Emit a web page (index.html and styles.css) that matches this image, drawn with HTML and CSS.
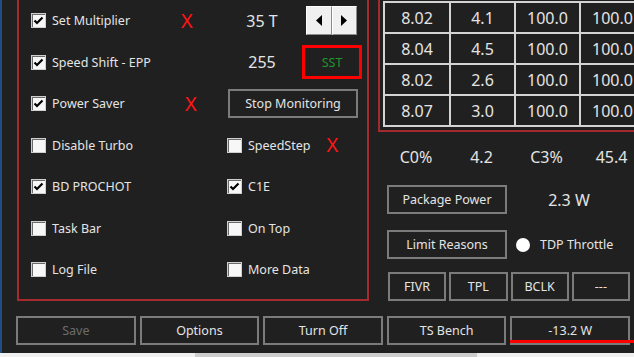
FILE: index.html
```html
<!DOCTYPE html>
<html lang="en">
<head>
    <meta charset="UTF-8">
    <meta name="viewport" content="width=device-width, initial-scale=1.0">
    <title>ThrottleStop</title>
    <link rel="stylesheet" href="styles.css">
</head>
<body>

<div class="app">
    <div class="top">
        <!-- Options panel -->
        <section class="options">
            <div class="row">
                <label class="check"><span class="box"><svg width="11" height="11" viewBox="0 0 11 11"><path d="M1.5 5.5 L4 8 L9.5 2.5" /></svg></span>Set Multiplier</label>
                <span class="mark">X</span>
                <div class="cell">
                    <span class="value">35 T</span>
                    <span class="arrows">
                        <span class="arrow"><svg width="6" height="11" viewBox="0 0 6 11"><path d="M6 0 L0 5.5 L6 11 Z" /></svg></span>
                        <span class="arrow"><svg width="6" height="11" viewBox="0 0 6 11"><path d="M0 0 L6 5.5 L0 11 Z" /></svg></span>
                    </span>
                </div>
            </div>
            <div class="row">
                <label class="check"><span class="box"><svg width="11" height="11" viewBox="0 0 11 11"><path d="M1.5 5.5 L4 8 L9.5 2.5" /></svg></span>Speed Shift - EPP</label>
                <span></span>
                <div class="cell">
                    <span class="value">255</span>
                    <span class="sst">SST</span>
                </div>
            </div>
            <div class="row">
                <label class="check"><span class="box"><svg width="11" height="11" viewBox="0 0 11 11"><path d="M1.5 5.5 L4 8 L9.5 2.5" /></svg></span>Power Saver</label>
                <span class="mark shift">X</span>
                <div class="cell">
                    <button class="btn stop">Stop Monitoring</button>
                </div>
            </div>
            <div class="row">
                <label class="check"><span class="box"></span>Disable Turbo</label>
                <span></span>
                <div class="cell">
                    <label class="check"><span class="box"></span>SpeedStep</label>
                    <span class="mark right-mark">X</span>
                </div>
            </div>
            <div class="row">
                <label class="check"><span class="box"><svg width="11" height="11" viewBox="0 0 11 11"><path d="M1.5 5.5 L4 8 L9.5 2.5" /></svg></span>BD PROCHOT</label>
                <span></span>
                <div class="cell">
                    <label class="check"><span class="box"><svg width="11" height="11" viewBox="0 0 11 11"><path d="M1.5 5.5 L4 8 L9.5 2.5" /></svg></span>C1E</label>
                </div>
            </div>
            <div class="row">
                <label class="check"><span class="box"></span>Task Bar</label>
                <span></span>
                <div class="cell">
                    <label class="check"><span class="box"></span>On Top</label>
                </div>
            </div>
            <div class="row">
                <label class="check"><span class="box"></span>Log File</label>
                <span></span>
                <div class="cell">
                    <label class="check"><span class="box"></span>More Data</label>
                </div>
            </div>
        </section>

        <div class="right">
            <!-- Core table -->
            <section class="table-panel">
                <div class="grid">
                    <span>8.02</span><span>4.1</span><span>100.0</span><span>100.0</span>
                    <span>8.04</span><span>4.5</span><span>100.0</span><span>100.0</span>
                    <span>8.02</span><span>2.6</span><span>100.0</span><span>100.0</span>
                    <span>8.07</span><span>3.0</span><span>100.0</span><span>100.0</span>
                </div>
            </section>

            <div class="cstates">
                <span>C0%</span><span>4.2</span><span>C3%</span><span>45.4</span>
            </div>

            <div class="power-row">
                <button class="btn">Package Power</button>
                <span class="watt">2.3 W</span>
            </div>
            <div class="power-row limit">
                <button class="btn">Limit Reasons</button>
                <span class="radio"></span>
                <span>TDP Throttle</span>
            </div>

            <div class="small">
                <button class="btn">FIVR</button>
                <button class="btn">TPL</button>
                <button class="btn">BCLK</button>
                <button class="btn">---</button>
            </div>
        </div>
    </div>

    <!-- Bottom buttons -->
    <div class="bottom">
        <button class="btn save">Save</button>
        <button class="btn">Options</button>
        <button class="btn">Turn Off</button>
        <button class="btn">TS Bench</button>
        <button class="btn">-13.2 W<span class="underline"></span></button>
    </div>
</div>

<div class="hscroll"><span class="thumb"></span></div>

</body>
</html>
```

FILE: styles.css
```css
* {
    box-sizing: border-box;
}

body {
    margin: 0;
    width: 634px;
    height: 357px;
    overflow: hidden;
    background-color: #202020;
    font-family: "Noto Sans", sans-serif;
    font-size: 12.5px;
    color: #e4e4e4;
}

.app {
    height: 353px;
    border-left: 2px solid #1f4d84;
    display: flex;
    flex-direction: column;
    overflow: hidden;
}

.top {
    display: flex;
    height: 301px;
    flex: none;
}

/* left panel with the check boxes */
.options {
    width: 352px;
    height: 303px;
    flex: none;
    margin: -2px 0 0 15px;
    padding: 0 0 0 12px;
    border: 2px solid #a52a2e;
}

.row {
    display: grid;
    grid-template-columns: 149px 47px 1fr;
    align-items: center;
    height: 41.5px;
}

.check {
    display: flex;
    align-items: center;
    gap: 6px;
    white-space: nowrap;
}

.box {
    width: 15px;
    height: 15px;
    flex: none;
    background-color: #f7f7f7;
    border: 1px solid #cfcfcf;
    box-shadow: inset 1px 1px 0 #6a6a6a;
    display: flex;
    align-items: center;
    justify-content: center;
}

.box svg path {
    fill: none;
    stroke: #000;
    stroke-width: 2.2;
}

.mark {
    color: #ff1414;
    font-size: 20px;
    line-height: 20px;
    margin-left: 1px;
}

.mark.shift {
    margin-left: 5px;
}

.mark.right-mark {
    margin-left: 16px;
}

.cell {
    display: flex;
    align-items: center;
}

.value {
    width: 70px;
    text-align: center;
    font-size: 16px;
}

.arrows {
    display: flex;
    margin-left: 9px;
}

.arrow {
    width: 25.5px;
    height: 29px;
    background-color: #f0f0f0;
    border: 1px solid;
    border-color: #ffffff #8c8c8c #8c8c8c #ffffff;
    display: flex;
    align-items: center;
    justify-content: center;
}

.sst {
    width: 60px;
    height: 34px;
    margin-left: 5px;
    border: 3px solid #ff0000;
    color: #21962a;
    display: flex;
    align-items: center;
    justify-content: center;
}

.btn {
    height: 29px;
    padding: 0;
    border: 2px solid #7b7b7b;
    background: transparent;
    color: #e4e4e4;
    font: inherit;
    display: flex;
    align-items: center;
    justify-content: center;
}

.stop {
    width: 130px;
    margin-left: 1px;
}

/* right side */
.right {
    width: 280px;
    flex: none;
    margin-left: 9px;
    display: flex;
    flex-direction: column;
}

.table-panel {
    margin-top: -3px;
    padding: 2px 0 3px 3px;
    border: 2px solid #a52a2e;
}

.grid {
    display: grid;
    grid-template-columns: 64px 63px 63px 63px;
    grid-auto-rows: 29px;
    gap: 2px;
    padding: 2px;
    width: max-content;
    background-color: #d4d4d4;
    font-size: 16px;
}

.grid span {
    background-color: #202020;
    display: flex;
    align-items: center;
    justify-content: center;
}

.cstates {
    display: grid;
    grid-template-columns: 66px 65px 65px 65px;
    align-items: center;
    height: 54px;
    padding-bottom: 3px;
    margin-left: 5px;
    font-size: 16px;
    text-align: center;
}

.power-row {
    display: flex;
    align-items: center;
    height: 29px;
    padding-left: 9px;
}

.power-row .btn {
    width: 120px;
}

.power-row.limit {
    margin-top: 16px;
}

.watt {
    width: 124px;
    text-align: center;
    font-size: 16px;
}

.radio {
    width: 14px;
    height: 14px;
    border-radius: 50%;
    background-color: #ffffff;
    margin: 0 10px 0 9px;
}

.small {
    display: grid;
    grid-template-columns: repeat(4, 1fr);
    gap: 3px;
    width: 242px;
    margin: 13px 0 0 10px;
}

.bottom {
    display: grid;
    grid-template-columns: repeat(5, 1fr);
    gap: 4px;
    width: 614px;
    margin: 15px 0 0 14px;
}

.bottom .btn {
    position: relative;
}

.save {
    color: #6c6c6c;
}

.underline {
    position: absolute;
    left: -2px;
    right: -6px;
    bottom: 0;
    height: 3px;
    background-color: #ff0000;
}

.hscroll {
    height: 4px;
    display: flex;
    background-color: #f0f0f0;
}

.thumb {
    width: 282px;
    margin-left: 195px;
    background-color: #cdcdcd;
}
```
